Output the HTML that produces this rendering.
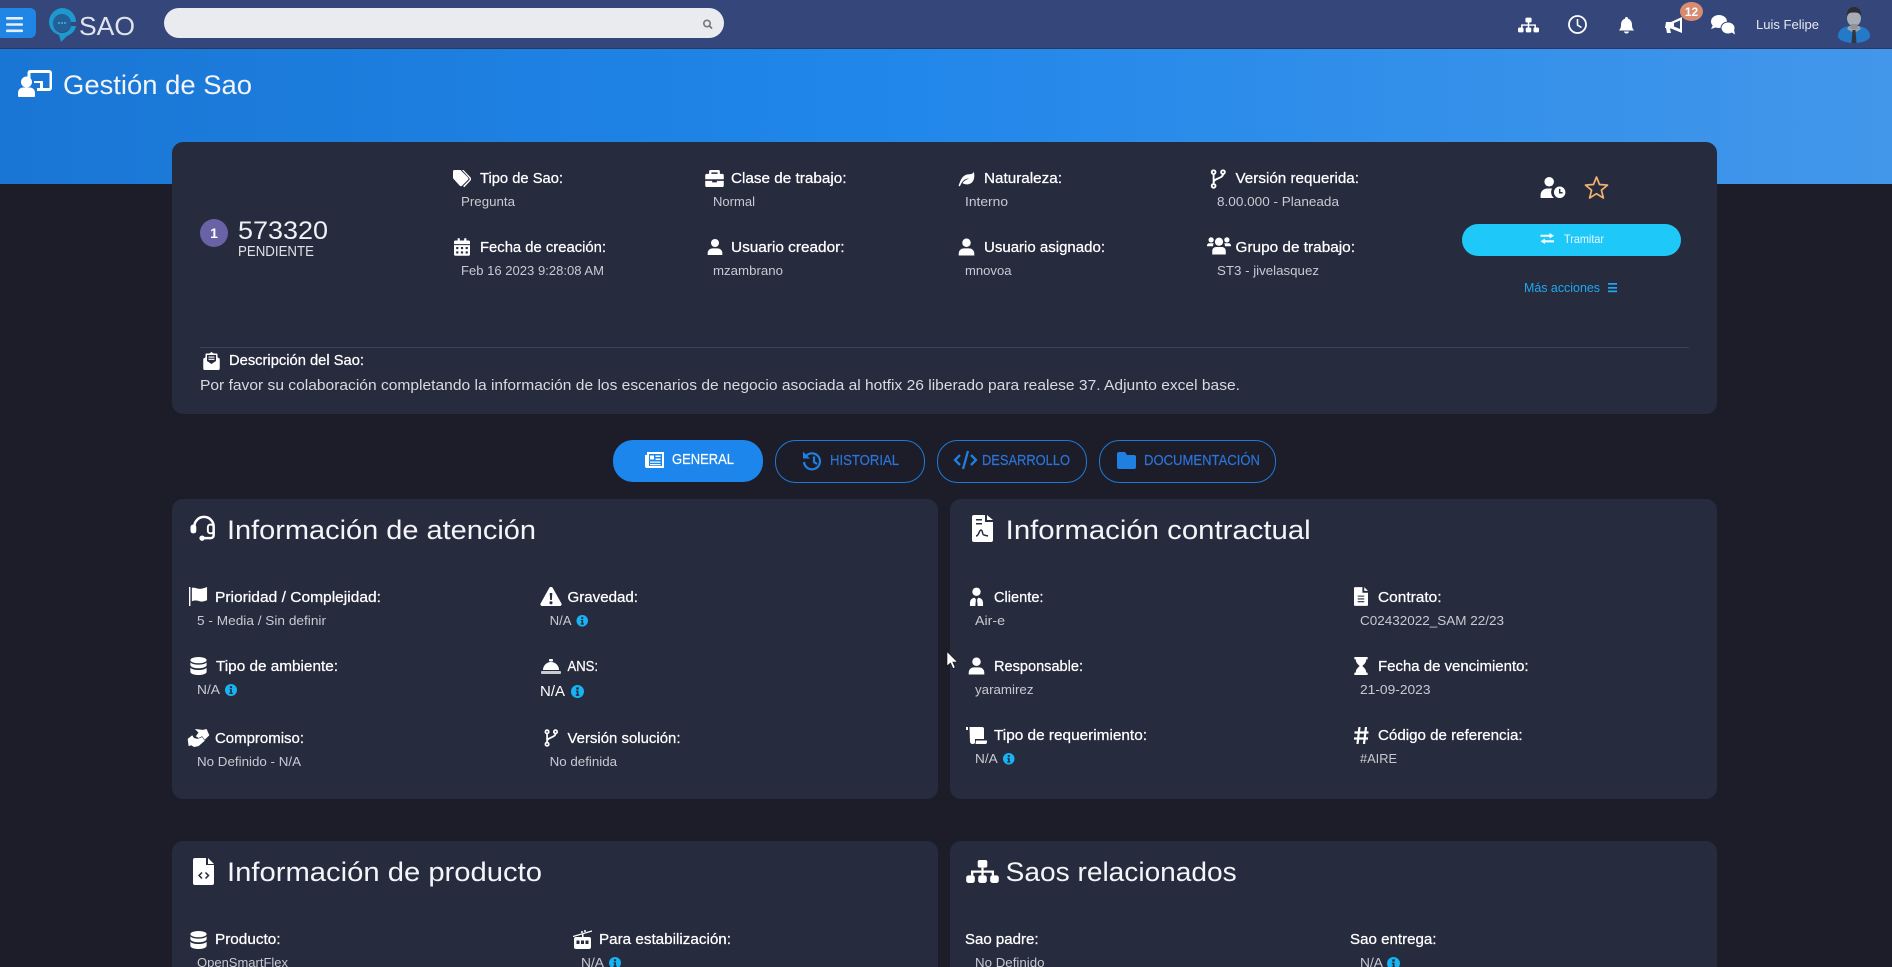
<!DOCTYPE html>
<html lang="es">
<head>
<meta charset="utf-8">
<title>Gestión de Sao</title>
<style>
html,body{margin:0;padding:0;width:1892px;height:967px;overflow:hidden;background:#1c1d28}
svg{display:block}
text{font-family:"Liberation Sans",sans-serif}
.l{font-size:14.5px;fill:#fff;stroke:#fff;stroke-width:.25px}
.v{font-size:12.5px;fill:#c8cad2}
.h{font-size:27px;fill:#f4f5f8}
.t{font-size:14.5px;fill:#2c74d8;stroke:#2c74d8;stroke-width:.2px}
</style>
</head>
<body>
<svg width="1892" height="967" viewBox="0 0 1892 967" xmlns="http://www.w3.org/2000/svg">
<defs>
<linearGradient id="hero" x1="0" y1="0" x2="1" y2="0">
<stop offset="0" stop-color="#1a76d4"/><stop offset=".45" stop-color="#2086ea"/><stop offset="1" stop-color="#4297ea"/>
</linearGradient>
<symbol id="person" viewBox="0 0 24 24"><circle cx="12" cy="6" r="6"/><path d="M1 24v-3a7 7 0 0 1 7-7h8a7 7 0 0 1 7 7v3z"/></symbol>
<symbol id="client" viewBox="0 0 24 32"><circle cx="12" cy="8" r="7"/><path d="M1 32v-6a8 8 0 0 1 8-8l2 3-1 11zM23 32v-6a8 8 0 0 0-8-8l-2 3 1 11z"/></symbol>
<symbol id="tag" viewBox="0 0 24 24"><path d="M0 2a2 2 0 0 1 2-2h8l10 10a2 2 0 0 1 0 3l-8 8a2 2 0 0 1-3 0L0 11z"/><path d="M14 0l9 9.500a3.500 3.500 0 0 1 0 5L15 23l-1.500-1.500 8-8a2 2 0 0 0 0-3L12 0z"/></symbol>
<symbol id="cal" viewBox="0 0 22 24"><path d="M5 0h3v3h6V0h3v3h3a2 2 0 0 1 2 2v3H0V5a2 2 0 0 1 2-2h3z"/><path fill-rule="evenodd" d="M0 9.500h22V22a2 2 0 0 1-2 2H2a2 2 0 0 1-2-2zM3 12v3h3v-3zm6.500 0v3h3v-3zm6.500 0v3h3v-3zM3 18v3h3v-3zm6.500 0v3h3v-3zm6.500 0v3h3v-3z"/></symbol>
<symbol id="brief" viewBox="0 0 24 22"><path fill-rule="evenodd" d="M7 0h10a2 2 0 0 1 2 2v3h3a2 2 0 0 1 2 2v5H0V7a2 2 0 0 1 2-2h3V2a2 2 0 0 1 2-2zm1 3v2h8V3z"/><path d="M0 14h9v2h6v-2h9v6a2 2 0 0 1-2 2H2a2 2 0 0 1-2-2z"/></symbol>
<symbol id="leaf" viewBox="0 0 24 24"><path d="M23 1c2 9 0 18-9 19-4 .4-7-1-8-2 3-4 7-6 11-7-5 0-10 2-13 8l-2 4-2-1 2-5C4 11 8 5 15 5c4 0 7-1 8-4z"/></symbol>
<symbol id="branch" viewBox="0 0 24 32"><g fill="none" stroke="#fff" stroke-width="3"><circle cx="5" cy="5" r="3"/><circle cx="5" cy="27" r="3"/><circle cx="20" cy="5" r="3"/><path d="M5 8v16M20 8c0 8-15 6-15 14"/></g></symbol>
<symbol id="users" viewBox="0 0 32 24"><circle cx="16" cy="7" r="5.500"/><circle cx="5.500" cy="4.500" r="3.500"/><circle cx="26.500" cy="4.500" r="3.500"/><path d="M7 24v-5a5 5 0 0 1 5-5h8a5 5 0 0 1 5 5v5zM0 13v-1a3 3 0 0 1 3-3h6a7 7 0 0 0-1 4zM32 13v-1a3 3 0 0 0-3-3h-6a7 7 0 0 1 1 4z"/></symbol>
<symbol id="mail" viewBox="0 0 22 24"><path d="M11 0l3 2h4a1 1 0 0 1 1 1v4l3 2v13a2 2 0 0 1-2 2H2a2 2 0 0 1-2-2V9l3-2V3a1 1 0 0 1 1-1h4z"/><path fill="#272b3e" d="M5 4h12v8l-6 4-6-4z"/><path d="M7 6h8v1.500H7zM7 9h8v1.500H7z"/></symbol>
<symbol id="pclock" viewBox="0 0 26 22"><circle cx="9" cy="5" r="5"/><path d="M0 22v-3a7 7 0 0 1 7-7h5a8 8 0 0 0 2 10z"/><circle cx="20" cy="16" r="6"/><path fill="none" stroke="#272b3e" stroke-width="1.500" d="M20 12.500V16.500h3"/></symbol>
<symbol id="headset" viewBox="0 0 28 28"><path fill="none" stroke="#fff" stroke-width="2.600" d="M4 14v-2a10 10 0 0 1 20 0v9a3 3 0 0 1-3 3h-8"/><rect y="10" width="6" height="9" rx="2.500"/><rect x="18" y="10" width="6" height="9" rx="2.500" fill="none" stroke="#fff" stroke-width="2"/><circle cx="12" cy="24" r="2.800"/></symbol>
<symbol id="pdf" viewBox="0 0 21 27"><path d="M2 0h11v7h8v18a2 2 0 0 1-2 2H2a2 2 0 0 1-2-2V2a2 2 0 0 1 2-2zM15 0l6 5h-6z"/><path fill="none" stroke="#272b3e" stroke-width="1.500" d="M4 21c3 0 3-6 5-6s1 5 3 5l4 1"/><path fill="#272b3e" d="M4 4h6v1.500H4zM4 8h6v1.500H4z"/></symbol>
<symbol id="flag" viewBox="0 0 20 20"><path d="M0 0h1.500v20H0z"/><path d="M3 1c3-1 5 1 8 1s5-1 8-2v14c-3 1-5 2-8 1s-5-1-8 0z"/></symbol>
<symbol id="warn" viewBox="0 0 24 22"><path fill-rule="evenodd" d="M12 0a2 2 0 0 1 2 1l10 18a2 2 0 0 1-2 3H2a2 2 0 0 1-2-3L10 1a2 2 0 0 1 2-1zm-1.500 7l.5 8h2l.5-8zM12 16.500a1.800 1.800 0 1 0 0 3.600 1.800 1.800 0 0 0 0-3.600z"/></symbol>
<symbol id="db" viewBox="0 0 18 20"><ellipse cx="9" cy="3.500" rx="9" ry="3.500"/><path d="M0 6v3c0 2 4 3.500 9 3.500s9-1.500 9-3.500V6c-2 2-5 2.500-9 2.500S2 8 0 6zM0 12v4.500C0 18.500 4 20 9 20s9-1.500 9-3.500V12c-2 2-5 2.500-9 2.500S2 14 0 12z"/></symbol>
<symbol id="concierge" viewBox="0 0 20 15"><rect x="8" width="4" height="2.500" rx="1"/><path d="M10 3a8 8 0 0 1 8 8H2a8 8 0 0 1 8-8z"/><rect y="12" width="20" height="3" rx="1" fill="#c9cbd3"/></symbol>
<symbol id="shake" viewBox="0 0 24 20"><path d="M8 0l9 1 4-1 3 7-5 5-3-4-4 2-3-2 3-4zM0 11l5-4 2 3 4 1 5-2 3 4-7 6-5 1-3-2-3 1z"/></symbol>
<symbol id="doc" viewBox="0 0 15 20"><path d="M1 0h8v6h6v13a1 1 0 0 1-1 1H1a1 1 0 0 1-1-1V1a1 1 0 0 1 1-1zM11 0l4 4h-4z"/><path fill="#272b3e" d="M4 9h7v1.200H4zM4 12h7v1.200H4zM4 15h7v1.200H4z"/></symbol>
<symbol id="hour" viewBox="0 0 14 19"><path d="M0 0h14v2.500h-1.500c0 4-2.500 5-4 7 1.500 2 4 3 4 7H14V19H0v-2.500h1.500c0-4 2.500-5 4-7-1.500-2-4-3-4-7H0z"/></symbol>
<symbol id="scroll" viewBox="0 0 21 17"><path d="M0 0h2v3H0zM3.500 0H16a2 2 0 0 1 2 2v10h-9v3a2 2 0 0 1-2 2H6a3 3 0 0 1-2-2z"/><path d="M10 13.500h11V15a2 2 0 0 1-2 2H9.500z"/></symbol>
<symbol id="hash" viewBox="0 0 15 17"><path fill="none" stroke="#fff" stroke-width="2.200" d="M5.500 0L3.500 17M12 0L10 17M.5 5.500h14M0 11.500h14"/></symbol>
<symbol id="filecode" viewBox="0 0 21 27"><path d="M2 0h11v7h8v18a2 2 0 0 1-2 2H2a2 2 0 0 1-2-2V2a2 2 0 0 1 2-2zM15 0l6 6h-6z"/><path fill="none" stroke="#272b3e" stroke-width="1.500" d="M9 14.500l-3 3 3 3M12.500 14.500l3 3-3 3"/></symbol>
<symbol id="sitemap" viewBox="0 0 34 24"><rect x="12" width="10" height="8" rx="2"/><rect y="16" width="9" height="8" rx="2.500"/><rect x="12.500" y="16" width="9" height="8" rx="2.500"/><rect x="25" y="16" width="9" height="8" rx="2.500"/><path d="M15.800 8h2.400v3H29v5h-2.400v-2.700H18.200V16h-2.400v-2.700H7.400V16H5v-5h10.800z"/></symbol>
<symbol id="tram" viewBox="0 0 19 19"><path fill="none" stroke="#fff" stroke-width="1.200" d="M0 6.500L19 1"/><circle cx="9" cy="2" r="1"/><circle cx="12" cy="1" r="1"/><path d="M9 4h1.500v3H9zM3 7h13a2 2 0 0 1 2 2v8a2 2 0 0 1-2 2H3a2 2 0 0 1-2-2V9a2 2 0 0 1 2-2z"/><path fill="#272b3e" d="M3.500 10.500h3V14h-3zM8 10.500h3V14H8zM12.500 10.500h3V14h-3z"/></symbol>
<symbol id="info" viewBox="0 0 12 12"><circle cx="6" cy="6" r="6" fill="#16b4f2"/><path fill="#272b3e" d="M6 2a1.200 1.200 0 1 1 0 2.400A1.200 1.200 0 0 1 6 2zM4.500 5.200h2.400v3.600h.8V10H4.400V8.800h.9V6.400h-.8z"/></symbol>
</defs>

<rect width="1892" height="967" fill="#1c1d28"/>
<rect y="49" width="1892" height="135" fill="url(#hero)"/>
<rect width="1892" height="49" fill="#34467a"/>
<rect y="48" width="1892" height="1" fill="#2a3760"/>

<!-- header -->
<path d="M0 8h30a6 6 0 0 1 6 6v18a6 6 0 0 1-6 6H0z" fill="#1f86e6"/>
<g fill="#e8eef8"><rect x="6" y="17" width="17" height="2.600" rx="1"/><rect x="6" y="23.200" width="17" height="2.600" rx="1"/><rect x="6" y="29.500" width="17" height="2.600" rx="1"/></g>
<path d="M62 8a14 14 0 0 1 14 14h-5a9 9 0 1 0 0 4h5c-1 5-4 8-9 10l-6 6-2-7c-6-2-10-7-10-13A14 14 0 0 1 62 8z" fill="#1c9ad0"/>
<circle cx="62" cy="23" r="9" fill="#245f97"/>
<g fill="#2fc0e6"><circle cx="59" cy="23" r="1"/><circle cx="62" cy="23" r="1"/><circle cx="65" cy="23" r="1"/></g>
<text x="79" y="35" font-size="26" fill="#dfe3ec" textLength="56" lengthAdjust="spacingAndGlyphs">SAO</text>
<rect x="164" y="8" width="560" height="30" rx="15" fill="#e9ebef"/>
<circle cx="707" cy="23.500" r="3.200" fill="none" stroke="#777" stroke-width="1.600"/><path d="M709.500 26l2.500 2.500" stroke="#777" stroke-width="1.800"/>

<use href="#sitemap" x="1518" y="17" width="21" height="16" fill="#fff"/>
<circle cx="1577.500" cy="24.500" r="8.500" fill="none" stroke="#fff" stroke-width="1.800"/><path d="M1577.500 19v6l4 2.500" fill="none" stroke="#fff" stroke-width="1.600"/>
<path d="M1626.500 17a1.500 1.500 0 0 1 1.500 1.800c3 .8 4 3.500 4 6.200 0 3 1 4 2 5.500h-15c1-1.500 2-2.500 2-5.500 0-2.700 1-5.400 4-6.200a1.500 1.500 0 0 1 1.500-1.800z" fill="#fff"/><path d="M1624 31.500h5a2.500 2 0 0 1-5 0z" fill="#fff"/>
<path d="M1666 22h5l11-5v16l-11-4.500-1 .2 1 4.300h-4l-1-5h-1z" fill="#fff"/><path d="M1674 23l6-2.500v8.500l-6-2.500z" fill="#34467a"/>
<ellipse cx="1691.500" cy="11.500" rx="11.500" ry="9.500" fill="#d98b70"/>
<text x="1691.500" y="16" font-size="12" font-weight="700" fill="#fff" text-anchor="middle">12</text>
<ellipse cx="1719" cy="21.500" rx="8" ry="6.500" fill="#fff"/><path d="M1713 25l-2 4 6-2z" fill="#fff"/>
<ellipse cx="1728" cy="28" rx="7" ry="6" fill="#fff" stroke="#34467a" stroke-width="1"/><path d="M1731 32l4 2.500-1-5z" fill="#fff"/>
<text x="1756" y="29" font-size="12.500" fill="#e8e8ee" textLength="63" lengthAdjust="spacingAndGlyphs">Luis Felipe</text>
<!-- avatar -->
<path d="M1838 36c0-6 5-9 11-10h10c6 1 11 4 11 10 0 4-7 7-16 7s-16-3-16-7z" fill="#2479c9"/>
<path d="M1849 26h10l2 3-7 4-7-4z" fill="#9ea3ad"/>
<path d="M1852.500 30h3l1 13h-5z" fill="#33363e"/>
<ellipse cx="1854" cy="18" rx="7" ry="8.500" fill="#a8acb4"/>
<rect x="1850.500" y="24" width="7" height="5" fill="#8f939c"/>
<path d="M1847 17c-1-7 3-10 7-10s8 3 7 10c-1-4-3-4.500-7-4.500s-6 .5-7 4.500z" fill="#2c2e35"/>

<!-- page title -->
<g fill="#fff">
<path fill-rule="evenodd" d="M30 70h19a3 3 0 0 1 3 3v15a3 3 0 0 1-3 3H37v-3h3v-5h-6v-2h9v7h6.500V73H30.500v5h-3v-5a3 3 0 0 1 2.500-3z"/>
<circle cx="26.500" cy="82" r="5.500"/><path d="M18 96v-3.500a5 5 0 0 1 5-5h7a5 5 0 0 1 5 5V96a1 1 0 0 1-1 1H19a1 1 0 0 1-1-1z"/>
</g>
<text x="63" y="94" class="h" textLength="189" lengthAdjust="spacingAndGlyphs">Gestión de Sao</text>

<!-- top card -->
<rect x="172" y="142" width="1545" height="272" rx="11" fill="#272b3e"/>
<circle cx="214" cy="233" r="14" fill="#6a62a6"/>
<text x="214" y="238" font-size="14" font-weight="700" fill="#fff" text-anchor="middle">1</text>
<text x="238" y="239" font-size="25" fill="#f0f1f5" textLength="90" lengthAdjust="spacingAndGlyphs">573320</text>
<text x="238" y="256" font-size="15" fill="#dfe1e8" textLength="76" lengthAdjust="spacingAndGlyphs">PENDIENTE</text>

<g fill="#fff">
<use href="#tag" x="453" y="170" width="18" height="18"/>
<use href="#cal" x="454" y="238" width="16" height="18"/>
<use href="#brief" x="705" y="170" width="19" height="17"/>
<use href="#person" x="707" y="238" width="16" height="18"/>
<use href="#leaf" x="957" y="171" width="19" height="16"/>
<use href="#person" x="958" y="238" width="17" height="18"/>
<use href="#branch" x="1209" y="169" width="18" height="20"/>
<use href="#users" x="1207" y="236" width="24" height="19"/>
</g>
<text class="l" x="480" y="183" textLength="83" lengthAdjust="spacingAndGlyphs">Tipo de Sao:</text>
<text class="v" x="461" y="206" textLength="54" lengthAdjust="spacingAndGlyphs">Pregunta</text>
<text class="l" x="480" y="252" textLength="126" lengthAdjust="spacingAndGlyphs">Fecha de creación:</text>
<text class="v" x="461" y="275" textLength="143" lengthAdjust="spacingAndGlyphs">Feb 16 2023 9:28:08 AM</text>
<text class="l" x="731" y="183" textLength="115.500" lengthAdjust="spacingAndGlyphs">Clase de trabajo:</text>
<text class="v" x="713" y="206" textLength="42" lengthAdjust="spacingAndGlyphs">Normal</text>
<text class="l" x="731" y="252" textLength="113.500" lengthAdjust="spacingAndGlyphs">Usuario creador:</text>
<text class="v" x="713" y="275" textLength="70" lengthAdjust="spacingAndGlyphs">mzambrano</text>
<text class="l" x="984" y="183" textLength="78" lengthAdjust="spacingAndGlyphs">Naturaleza:</text>
<text class="v" x="965" y="206" textLength="43" lengthAdjust="spacingAndGlyphs">Interno</text>
<text class="l" x="984" y="252" textLength="121" lengthAdjust="spacingAndGlyphs">Usuario asignado:</text>
<text class="v" x="965" y="275" textLength="46.500" lengthAdjust="spacingAndGlyphs">mnovoa</text>
<text class="l" x="1235.500" y="183" textLength="123.500" lengthAdjust="spacingAndGlyphs">Versión requerida:</text>
<text class="v" x="1217" y="206" textLength="122" lengthAdjust="spacingAndGlyphs">8.00.000 - Planeada</text>
<text class="l" x="1235.500" y="252" textLength="119.500" lengthAdjust="spacingAndGlyphs">Grupo de trabajo:</text>
<text class="v" x="1217" y="275" textLength="102" lengthAdjust="spacingAndGlyphs">ST3 - jivelasquez</text>

<use href="#pclock" x="1540" y="177" width="26" height="21" fill="#fff"/>
<path d="M1596.500 177l3 7.500 8 .6-6.100 5.100 2 7.800-6.900-4.300-6.900 4.300 2-7.800-6.100-5.100 8-.6z" fill="none" stroke="#f0b070" stroke-width="1.700" stroke-linejoin="round"/>
<rect x="1462" y="224" width="219" height="32" rx="16" fill="#1ec8f8"/>
<path d="M1549.500 233l4.500 2.750-4.500 2.750v-1.700h-9v-2.100h9zM1545 238.500v1.800h9v2.100h-9V244l-4.500-2.750z" fill="#f4fbff"/>
<text x="1564" y="243" font-size="12" fill="#eaf8ff" textLength="40" lengthAdjust="spacingAndGlyphs">Tramitar</text>
<text x="1524" y="292" font-size="12.500" fill="#20a8ee" textLength="76" lengthAdjust="spacingAndGlyphs">Más acciones</text>
<g fill="#20a8ee"><rect x="1608" y="283" width="9" height="1.700"/><rect x="1608" y="287" width="9" height="1.700"/><rect x="1608" y="290.500" width="9" height="1.700"/></g>

<rect x="200" y="347" width="1489" height="1" fill="#3d4156"/>
<use href="#mail" x="202" y="352" width="19" height="18" fill="#fff"/>
<text class="l" x="229" y="365" textLength="135" lengthAdjust="spacingAndGlyphs">Descripción del Sao:</text>
<text x="200" y="390" font-size="14.500" fill="#d8dae0" textLength="1040" lengthAdjust="spacingAndGlyphs">Por favor su colaboración completando la información de los escenarios de negocio asociada al hotfix 26 liberado para realese 37. Adjunto excel base.</text>

<!-- tabs -->
<rect x="613" y="440" width="150" height="42" rx="20" fill="#1c86ec"/>
<rect x="775.500" y="440.500" width="149" height="42" rx="20" fill="none" stroke="#1f79d6"/>
<rect x="937.500" y="440.500" width="149" height="42" rx="20" fill="none" stroke="#1f79d6"/>
<rect x="1099.500" y="440.500" width="176" height="42" rx="20" fill="none" stroke="#1f79d6"/>
<path fill="#fff" fill-rule="evenodd" d="M647 452h17v16h-17a2 2 0 0 1-2-2v-11h2zm2 2v12h13v-12zm1 1.500h4v4h-4zm5.500 0h5v1.500h-5zm0 3h5v1.500h-5zm-5.500 3h10.500v1.300H650zm0 2.500h10.500v1.300H650z"/>
<text x="672" y="464" font-size="14.500" fill="#fff" stroke="#fff" stroke-width=".2" textLength="62" lengthAdjust="spacingAndGlyphs">GENERAL</text>
<g fill="none" stroke="#1f80e2" stroke-width="2.200"><path d="M806 456a8 8 0 1 1-2 6"/><path d="M814 456.500v5.500l3 2"/></g><path d="M803 451.500v7h7z" fill="#1f80e2"/>
<text class="t" x="830" y="465" textLength="69" lengthAdjust="spacingAndGlyphs">HISTORIAL</text>
<path d="M960 455l-5 5 5 5M971 455l5 5-5 5M968 451l-5 18" fill="none" stroke="#1f80e2" stroke-width="2.300"/>
<text class="t" x="982" y="465" textLength="88" lengthAdjust="spacingAndGlyphs">DESARROLLO</text>
<path d="M1119 452h6l2 3h7a2 2 0 0 1 2 2v10a2 2 0 0 1-2 2h-15a2 2 0 0 1-2-2v-13a2 2 0 0 1 2-2z" fill="#1f80e2"/>
<text class="t" x="1144" y="465" textLength="116" lengthAdjust="spacingAndGlyphs">DOCUMENTACIÓN</text>

<!-- panel: atención -->
<rect x="172" y="499" width="766" height="300" rx="11" fill="#272b3e"/>
<use href="#headset" x="190" y="515" width="28" height="27" fill="#fff"/>
<text class="h" x="227" y="539" textLength="309" lengthAdjust="spacingAndGlyphs">Información de atención</text>
<g fill="#fff">
<use href="#flag" x="189" y="587" width="19" height="19"/>
<use href="#warn" x="540" y="587" width="22" height="19"/>
<use href="#db" x="190" y="657" width="17" height="18"/>
<use href="#concierge" x="541" y="659" width="20" height="15"/>
<use href="#shake" x="187" y="729" width="23" height="18"/>
<use href="#branch" x="542" y="729" width="18" height="18"/>
</g>
<text class="l" x="215" y="602" textLength="166" lengthAdjust="spacingAndGlyphs">Prioridad / Complejidad:</text>
<text class="v" x="197" y="625" textLength="129" lengthAdjust="spacingAndGlyphs">5 - Media / Sin definir</text>
<text class="l" x="567.500" y="602" textLength="70.500" lengthAdjust="spacingAndGlyphs">Gravedad:</text>
<text class="v" x="549.600" y="625" textLength="22" lengthAdjust="spacingAndGlyphs">N/A</text>
<use href="#info" x="576.500" y="615" width="11.500" height="11.500"/>
<text class="l" x="216" y="671" textLength="122" lengthAdjust="spacingAndGlyphs">Tipo de ambiente:</text>
<text class="v" x="197" y="694" textLength="23" lengthAdjust="spacingAndGlyphs">N/A</text>
<use href="#info" x="225" y="684" width="12" height="12"/>
<text class="l" x="567.500" y="671" textLength="30.500" lengthAdjust="spacingAndGlyphs">ANS:</text>
<text x="540" y="696" font-size="15" fill="#fff" textLength="25" lengthAdjust="spacingAndGlyphs">N/A</text>
<use href="#info" x="571" y="685" width="13" height="13"/>
<text class="l" x="215" y="743" textLength="89" lengthAdjust="spacingAndGlyphs">Compromiso:</text>
<text class="v" x="197" y="766" textLength="104" lengthAdjust="spacingAndGlyphs">No Definido - N/A</text>
<text class="l" x="567.500" y="743" textLength="113" lengthAdjust="spacingAndGlyphs">Versión solución:</text>
<text class="v" x="549.600" y="766" textLength="67.500" lengthAdjust="spacingAndGlyphs">No definida</text>

<!-- panel: contractual -->
<rect x="950" y="499" width="767" height="300" rx="11" fill="#272b3e"/>
<use href="#pdf" x="972" y="515" width="21" height="27" fill="#fff"/>
<text class="h" x="1005.700" y="539" textLength="305" lengthAdjust="spacingAndGlyphs">Información contractual</text>
<g fill="#fff">
<use href="#client" x="968" y="587" width="17" height="19"/>
<use href="#doc" x="1354" y="587" width="14" height="19"/>
<use href="#person" x="968" y="657" width="17" height="18"/>
<use href="#hour" x="1354" y="657" width="14" height="18"/>
<use href="#scroll" x="966" y="727" width="21" height="17"/>
<use href="#hash" x="1354" y="727" width="15" height="17"/>
</g>
<text class="l" x="994" y="602" textLength="49.500" lengthAdjust="spacingAndGlyphs">Cliente:</text>
<text class="v" x="975" y="625" textLength="30" lengthAdjust="spacingAndGlyphs">Air-e</text>
<text class="l" x="1378" y="602" textLength="63.500" lengthAdjust="spacingAndGlyphs">Contrato:</text>
<text class="v" x="1360" y="625" textLength="144" lengthAdjust="spacingAndGlyphs">C02432022_SAM 22/23</text>
<text class="l" x="994" y="671" textLength="89" lengthAdjust="spacingAndGlyphs">Responsable:</text>
<text class="v" x="975" y="694" textLength="58.500" lengthAdjust="spacingAndGlyphs">yaramirez</text>
<text class="l" x="1378" y="671" textLength="150.600" lengthAdjust="spacingAndGlyphs">Fecha de vencimiento:</text>
<text class="v" x="1360" y="694" textLength="70.500" lengthAdjust="spacingAndGlyphs">21-09-2023</text>
<text class="l" x="994" y="740" textLength="153" lengthAdjust="spacingAndGlyphs">Tipo de requerimiento:</text>
<text class="v" x="975" y="763" textLength="22.700" lengthAdjust="spacingAndGlyphs">N/A</text>
<use href="#info" x="1003" y="753" width="11.500" height="11.500"/>
<text class="l" x="1378" y="740" textLength="144.600" lengthAdjust="spacingAndGlyphs">Código de referencia:</text>
<text class="v" x="1360" y="763" textLength="37" lengthAdjust="spacingAndGlyphs">#AIRE</text>

<!-- panel: producto -->
<rect x="172" y="841" width="766" height="140" rx="11" fill="#272b3e"/>
<use href="#filecode" x="193" y="858" width="21" height="27" fill="#fff"/>
<text class="h" x="227" y="881" textLength="315" lengthAdjust="spacingAndGlyphs">Información de producto</text>
<use href="#db" x="190" y="931" width="17" height="18" fill="#fff"/>
<text class="l" x="215" y="944" textLength="65.500" lengthAdjust="spacingAndGlyphs">Producto:</text>
<text class="v" x="197" y="967" textLength="91" lengthAdjust="spacingAndGlyphs">OpenSmartFlex</text>
<use href="#tram" x="573" y="930" width="19" height="19" fill="#fff"/>
<text class="l" x="599" y="944" textLength="132" lengthAdjust="spacingAndGlyphs">Para estabilización:</text>
<text class="v" x="581" y="967" textLength="23" lengthAdjust="spacingAndGlyphs">N/A</text>
<use href="#info" x="609" y="957" width="12" height="12"/>

<!-- panel: relacionados -->
<rect x="950" y="841" width="767" height="140" rx="11" fill="#272b3e"/>
<use href="#sitemap" x="966" y="860" width="33" height="23" fill="#fff"/>
<text class="h" x="1005.700" y="881" textLength="231" lengthAdjust="spacingAndGlyphs">Saos relacionados</text>
<text class="l" x="965" y="944" textLength="73.500" lengthAdjust="spacingAndGlyphs">Sao padre:</text>
<text class="v" x="975" y="967" textLength="69.500" lengthAdjust="spacingAndGlyphs">No Definido</text>
<text class="l" x="1350" y="944" textLength="86.500" lengthAdjust="spacingAndGlyphs">Sao entrega:</text>
<text class="v" x="1360" y="967" textLength="23" lengthAdjust="spacingAndGlyphs">N/A</text>
<use href="#info" x="1387" y="957" width="13" height="13"/>

<!-- cursor -->
<path d="M947 651.500v14.500l3.500-3 2.500 5.500 2.200-1-2.400-5.400h4.700z" fill="#fff" stroke="#111" stroke-width=".6"/>
</svg>
</body>
</html>
